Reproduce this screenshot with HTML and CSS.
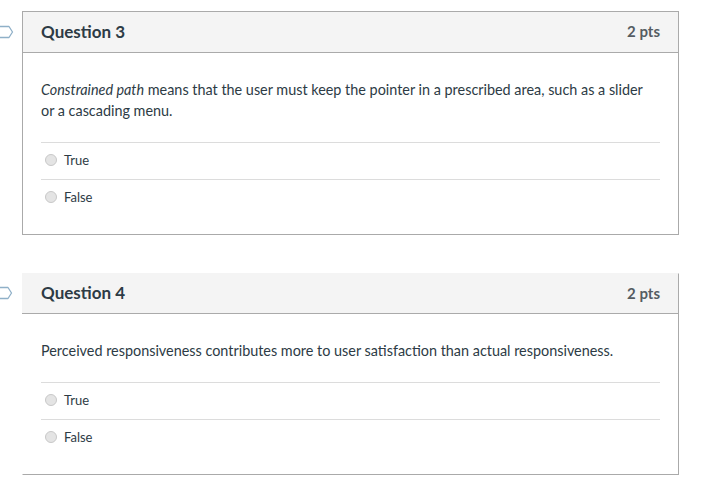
FILE: index.html
```html
<!DOCTYPE html>
<html>
<head>
<meta charset="utf-8">
<link rel="stylesheet" href="styles.css">
</head>
<body>
<div class="quiz">
  <div class="question">
    <div class="q-header">
      <svg class="flag" width="14" height="14" viewBox="0 0 14 14"><path d="M-3 1.5 H9 L12.5 7 L9 12.5 H-3" fill="none" stroke="#8fb0c8" stroke-width="1.3" stroke-linejoin="round"/></svg>
      <span class="q-title">Question 3</span>
      <span class="q-pts">2 pts</span>
    </div>
    <div class="q-body">
      <p class="q-text"><em>Constrained path</em> means that the user must keep the pointer in a prescribed area, such as a slider or a cascading menu.</p>
      <div class="answers">
        <label class="answer"><span class="radio"></span><span>True</span></label>
        <label class="answer"><span class="radio"></span><span>False</span></label>
      </div>
    </div>
  </div>
  <div class="question open-top">
    <div class="q-header">
      <svg class="flag" width="14" height="14" viewBox="0 0 14 14"><path d="M-3 1.5 H9 L12.5 7 L9 12.5 H-3" fill="none" stroke="#8fb0c8" stroke-width="1.3" stroke-linejoin="round"/></svg>
      <span class="q-title">Question 4</span>
      <span class="q-pts">2 pts</span>
    </div>
    <div class="q-body">
      <p class="q-text">Perceived responsiveness contributes more to user satisfaction than actual responsiveness.</p>
      <div class="answers">
        <label class="answer"><span class="radio"></span><span>True</span></label>
        <label class="answer"><span class="radio"></span><span>False</span></label>
      </div>
    </div>
  </div>
</div>
</body>
</html>
```
FILE: styles.css
```css
html, body {
  margin: 0;
  padding: 0;
  background: #fff;
}
body {
  font-family: Lato, "Open Sans", sans-serif;
  color: #2d3b45;
}
.quiz {
  display: flex;
  flex-direction: column;
  gap: 38px;
  padding: 11px 40px 0 22px;
}
.question {
  border: 1px solid #aaaaaa;
  width: 655px;
}
.question.open-top {
  border-top-color: #fff;
  border-left-color: #fff;
}
.question.open-top .q-header {
  margin-left: -1px;
  margin-top: -1px;
  padding-top: 1px;
  padding-left: 19px;
}
.q-header {
  position: relative;
  display: flex;
  justify-content: space-between;
  align-items: center;
  box-sizing: border-box;
  height: 41px;
  padding: 0 18px 2px 18px;
  background: #f4f4f4;
  border-bottom: 1px solid #aaaaaa;
}
.flag {
  position: absolute;
  left: -23px;
  top: 13px;
}
.q-title {
  font-weight: 700;
  font-size: 17px;
  color: #2d3b45;
}
.q-pts {
  font-weight: 700;
  font-size: 15px;
  color: #555c62;
}
.q-body {
  padding: 26px 18px 18px 18px;
}
.q-text {
  margin: 0 0 21px 0;
  padding-right: 4px;
  font-size: 14.4px;
  line-height: 21px;
}
.answer {
  display: flex;
  align-items: center;
  gap: 7px;
  height: 37px;
  border-top: 1px solid #dcdcdc;
  box-sizing: border-box;
  padding: 0 0 3px 4px;
  font-size: 13px;
  color: #2d3b45;
}
.radio {
  width: 10px;
  height: 10px;
  border-radius: 50%;
  background: #e4e4e4;
  border: 1px solid #c8c8c8;
}
```
